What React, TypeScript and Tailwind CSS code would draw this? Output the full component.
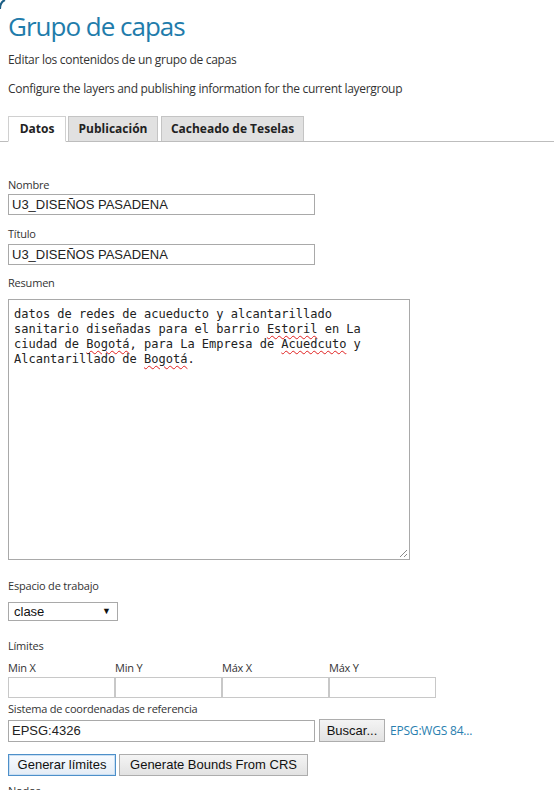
import React from 'react';

const labelCls = "block text-[11px] leading-[14px] tracking-[-0.2px] text-[#333] font-['Open_Sans',sans-serif]";
const inputCls = "block h-[21px] border border-[#a9a9a9] bg-white px-[3px] text-[13px] leading-[19px] text-[#222] font-['Liberation_Sans',Arial,sans-serif] outline-none";

const Misspelled: React.FC<{ children: React.ReactNode }> = ({ children }) => (
  <span className="underline decoration-wavy decoration-[#e02020] decoration-1 underline-offset-2">{children}</span>
);

export default function App() {
  return (
    <div className="relative min-h-[790px] bg-white pl-2 font-['Open_Sans',sans-serif] text-[#333]">
      <svg className="absolute left-0 top-0" width="6" height="10" viewBox="0 0 6 10">
        <path d="M0 9 Q0 2 5 0" stroke="#1d5f85" strokeWidth="2" fill="none" />
      </svg>

      <h1 className="pt-[11px] text-[26px] leading-[30px] text-[#1f7cab] font-['Open_Sans',sans-serif] tracking-[-1px]">
        Grupo de capas
      </h1>
      <p className="mt-[11px] text-[12px] leading-[16px] tracking-[-0.3px]">Editar los contenidos de un grupo de capas</p>
      <p className="mt-[13px] text-[12px] leading-[16px] tracking-[-0.3px]">
        Configure the layers and publishing information for the current layergroup
      </p>

      {/* tabs */}
      <div className="-ml-2 mt-[19px] flex items-end border-b border-[#bdbdbd] pl-2">
        <div className="-mb-px flex h-[26px] w-[58px] items-center justify-center border border-b-white border-[#d0d0d0] bg-white text-[12px] font-bold text-[#222]">
          Datos
        </div>
        <div className="ml-[2px] flex h-[25px] w-[90px] items-center justify-center border border-b-0 border-[#c4c4c4] bg-[#e1e1e1] text-[12px] font-bold text-[#222]">
          Publicación
        </div>
        <div className="ml-[3px] flex h-[25px] w-[143px] items-center justify-center border border-b-0 border-[#c4c4c4] bg-[#e1e1e1] text-[12px] font-bold text-[#222]">
          Cacheado de Teselas
        </div>
      </div>

      <form className="block">
        <label className={`${labelCls} mt-[36px]`}>Nombre</label>
        <input className={`${inputCls} mt-[2px] w-[307px]`} defaultValue="U3_DISEÑOS PASADENA" />

        <label className={`${labelCls} mt-[12px]`}>Título</label>
        <input className={`${inputCls} mt-[3px] w-[307px]`} defaultValue="U3_DISEÑOS PASADENA" />

        <label className={`${labelCls} mt-[11px]`}>Resumen</label>
        <div className="relative mt-[9px] h-[261px] w-[402px] border border-[#a9a9a9] bg-white px-[5px] pt-[7px] font-['DejaVu_Sans_Mono','Liberation_Mono',monospace] text-[12px] leading-[15px] text-[#222]">
          datos de redes de acueducto y alcantarillado
          <br />
          sanitario diseñadas para el barrio <Misspelled>Estoril</Misspelled> en La
          <br />
          ciudad de <Misspelled>Bogotá</Misspelled>, para La Empresa de <Misspelled>Acuedcuto</Misspelled> y
          <br />
          Alcantarillado de <Misspelled>Bogotá</Misspelled>.
          <svg className="absolute bottom-[1px] right-[1px]" width="9" height="9" viewBox="0 0 9 9">
            <path d="M8 1 L1 8 M8 5 L5 8" stroke="#8a8a8a" strokeWidth="1" />
          </svg>
        </div>

        <label className={`${labelCls} mt-[19px]`}>Espacio de trabajo</label>
        <div className="mt-[9px] flex h-[19px] w-[110px] items-center justify-between border border-[#a9a9a9] bg-white pl-[5px] pr-[6px] font-['Liberation_Sans',Arial,sans-serif] text-[13px] text-[#111]">
          <span>clase</span>
          <span className="text-[9px]">▼</span>
        </div>

        <label className={`${labelCls} mt-[18px]`}>Límites</label>
        <div className="mt-[8px] flex">
          {['Min X', 'Min Y', 'Máx X', 'Máx Y'].map((l) => (
            <div key={l} className="w-[107px]">
              <span className={labelCls}>{l}</span>
              <input className={`${inputCls} mt-[2px] w-[107px] border-[#c8c8c8]`} />
            </div>
          ))}
        </div>

        <label className={`${labelCls} mt-[4px]`}>Sistema de coordenadas de referencia</label>
        <div className="mt-[3px] flex items-center">
          <input className={`${inputCls} h-[22px] w-[307px]`} defaultValue="EPSG:4326" />
          <button type="button" className="ml-[4px] h-[23px] w-[66px] border border-[#adadad] bg-gradient-to-b from-[#f4f4f4] to-[#e2e2e2] text-[13px] text-[#111] font-['Liberation_Sans',Arial,sans-serif]">
            Buscar...
          </button>
          <a className="ml-[5px] text-[12px] tracking-[-0.2px] text-[#2a7fb0] font-['Open_Sans',sans-serif]" href="#">EPSG:WGS 84...</a>
        </div>

        <div className="mt-[12px] flex">
          <button type="button" className="h-[22px] w-[108px] border border-[#4d8fc9] bg-gradient-to-b from-[#f8fbff] to-[#e4ecf5] text-[13px] text-[#111] font-['Liberation_Sans',Arial,sans-serif] shadow-[inset_0_0_0_1px_#c9dff3]">
            Generar límites
          </button>
          <button type="button" className="ml-[3px] h-[22px] w-[189px] border border-[#adadad] bg-gradient-to-b from-[#f4f4f4] to-[#e2e2e2] text-[13px] text-[#111] font-['Liberation_Sans',Arial,sans-serif]">
            Generate Bounds From CRS
          </button>
        </div>

        <label className={`${labelCls} mt-[8px]`}>Nodos</label>
      </form>
    </div>
  );
}
